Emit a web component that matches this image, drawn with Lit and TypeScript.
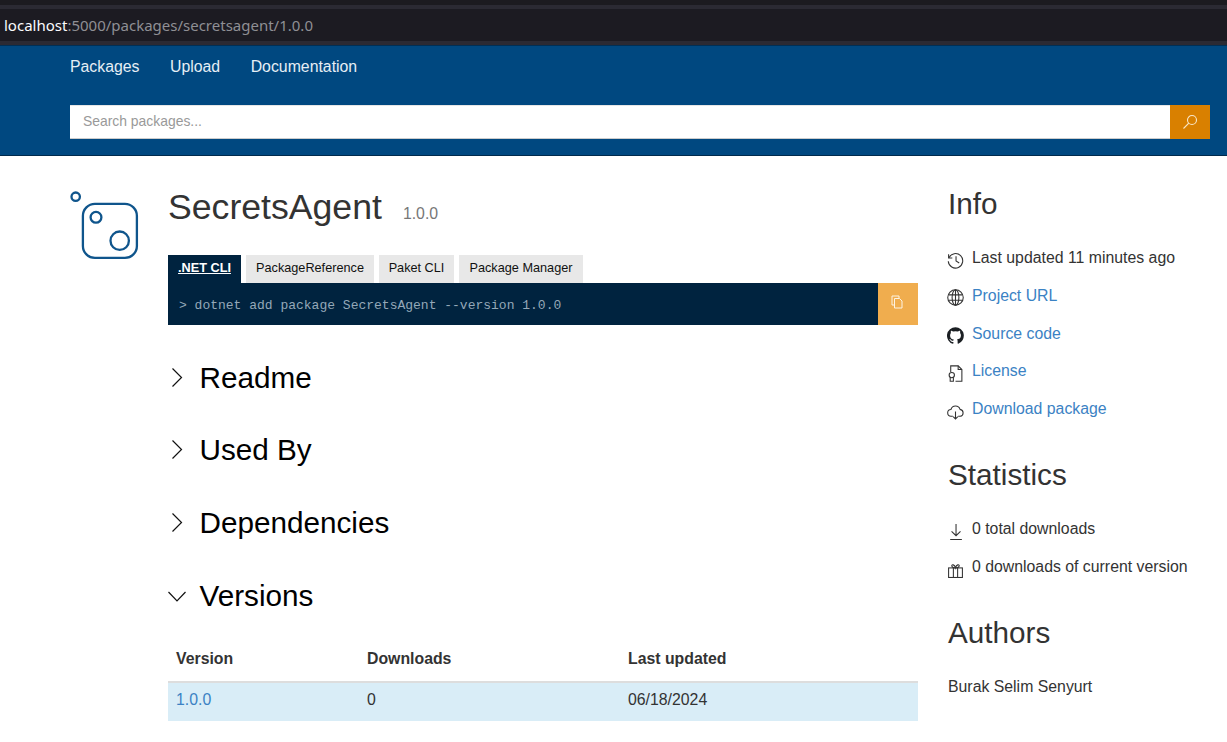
import { LitElement, css, html, svg } from 'lit';
import { customElement } from 'lit/decorators.js';

const icon = (content: unknown, cls = '') =>
  html`<svg class="icon ${cls}" viewBox="0 0 16 16" fill="none" stroke="#333" stroke-width="1">${content}</svg>`;

const icons = {
  history: svg`<path d="M1.500 2.200v3.500H5"/><path d="M1.800 5.500a6.800 6.800 0 1 1-.6 3.200"/><path d="M8.500 4v4.500l3 1.800"/>`,
  globe: svg`<circle cx="8" cy="8" r="7.300"/><ellipse cx="8" cy="8" rx="3.200" ry="7.300"/><path d="M8 .7v14.600M1.500 5.500h13M1.500 10.500h13"/>`,
  github: svg`<path fill="#1b1f23" stroke="none" d="M8 .2a8 8 0 0 0-2.500 15.600c.4.100.5-.2.5-.4v-1.400c-2.200.5-2.700-1-2.700-1-.4-.9-.9-1.200-.9-1.200-.7-.5.1-.5.1-.5.8.1 1.200.8 1.200.8.7 1.200 1.900.9 2.300.7.1-.5.300-.9.500-1.100-1.800-.2-3.600-.9-3.600-4 0-.9.300-1.600.8-2.100-.1-.2-.4-1 .1-2.100 0 0 .7-.2 2.200.8a7.600 7.600 0 0 1 4 0c1.500-1 2.200-.8 2.200-.8.4 1.100.2 1.900.1 2.100.5.600.8 1.300.8 2.100 0 3.100-1.900 3.700-3.700 3.900.3.300.6.800.6 1.500v2.200c0 .2.100.5.600.4A8 8 0 0 0 8 .2z"/>`,
  license: svg`<path d="M3.500 6.500V.8h7l3.500 3.500v11H8"/><path d="M10.500.8v3.500H14"/><circle cx="4.500" cy="9.500" r="2.500"/><path d="M3 11.500v3.800h3v-3.800"/>`,
  cloud: svg`<path d="M5.500 12.500H4a3.200 3.200 0 0 1-.3-6.400A4.500 4.500 0 0 1 12.300 6a3.300 3.300 0 0 1 .2 6.500h-2"/><path d="M8 8v7M5.800 12.800 8 15l2.200-2.200"/>`,
  down: svg`<path d="M8.500 1v11M4.300 7.800l4.200 4.200 4.200-4.200M3 15.500h11"/>`,
  gift: svg`<rect x="1.500" y="6.500" width="13" height="9"/><path d="M6 6.500v9M10 6.500v9"/><path d="M8 6.500C5.500 6.500 4.500 5.300 4.500 4.300S7 2.800 8 6.500c1-3.700 3.500-3.200 3.500-2.200S10.500 6.500 8 6.500z"/>`,
};

@customElement('app-root')
export class AppRoot extends LitElement {
  static styles = css`
    * {
      box-sizing: border-box;
    }

    :host {
      display: block;
      height: 742px;
      overflow: hidden;
      background: #fff;
      color: #333;
      font-family: 'Liberation Sans', Arial, sans-serif;
      font-size: 15.84px;
      line-height: 1.15;
    }

    a {
      color: #3b82c4;
      text-decoration: none;
    }

    .browser {
      height: 46px;
      background: #1c1b22;
      border-top: 5px solid #1c1b20;
      border-bottom: 1px solid #002f55;
      display: flex;
      flex-direction: column;
    }

    .browser .band {
      height: 4px;
      background: #2b2a33;
      flex: none;
    }

    .url {
      flex: 1;
      display: flex;
      align-items: center;
      padding: 2px 0 0 4px;
      font-family: 'Noto Sans', 'Open Sans', sans-serif;
      font-size: 15px;
      color: #8f8f94;
    }

    .url b {
      font-weight: 400;
      color: #fbfbfe;
    }

    header {
      height: 110px;
      background: #004880;
      border-bottom: 1px solid #002a4c;
      padding: 0 17px 0 70px;
    }

    nav {
      display: flex;
      gap: 30.5px;
      height: 59px;
      padding-top: 12px;
    }

    nav a {
      color: #e6eef5;
    }

    .search {
      display: flex;
      height: 34px;
    }

    .search .input {
      flex: 1;
      background: #fff;
      border-top: 1px solid #e6e6e6;
      border-bottom: 1px solid #ccc;
      padding: 7px 13px;
      font-size: 13.9px;
      color: #999;
    }

    .search .go {
      width: 40px;
      background: #d98000;
      display: flex;
      align-items: center;
      justify-content: center;
    }

    .search svg {
      width: 16px;
      height: 16px;
    }

    .page {
      display: flex;
      padding-left: 70px;
    }

    .logo {
      width: 98px;
      flex: none;
      padding-top: 34px;
    }

    .logo svg {
      display: block;
      width: 70px;
      height: 72px;
    }

    .content {
      width: 750px;
      flex: none;
    }

    .title {
      display: flex;
      align-items: baseline;
      gap: 21px;
      padding-top: 31px;
      height: 99px;
    }

    .title h1 {
      margin: 0;
      font-size: 35.64px;
      font-weight: 400;
    }

    .title span {
      color: #777;
    }

    .tabs {
      display: flex;
      gap: 5px;
      height: 28px;
    }

    .tab {
      background: #e8e8e8;
      color: #111;
      font-size: 12.7px;
      display: flex;
      align-items: center;
      justify-content: center;
      padding-bottom: 1px;
    }

    .tab.active {
      background: #00233f;
      color: #fff;
      font-weight: 700;
      text-decoration: underline;
    }

    .command {
      display: flex;
      height: 42px;
    }

    .command code {
      flex: 1;
      background: #00233f;
      color: #94a8b8;
      font-family: 'Liberation Mono', monospace;
      font-size: 13px;
      padding: 4px 0 0 11px;
      display: flex;
      align-items: center;
    }

    .command .copy {
      width: 40px;
      background: #f0ad4e;
      display: flex;
      align-items: center;
      justify-content: center;
      padding: 0 2px 4px 0;
    }

    .command svg {
      width: 14px;
      height: 14px;
    }

    .sections {
      padding-top: 16.3px;
    }

    .section {
      height: 72.8px;
      display: flex;
      align-items: center;
      gap: 13.5px;
      color: #000;
      font-size: 29.7px;
    }

    .section svg {
      width: 18px;
      height: 20px;
      flex: none;
    }

    table {
      width: 100%;
      border-collapse: collapse;
      margin-top: 9.5px;
    }

    th {
      text-align: left;
      font-weight: 700;
      padding: 8px 8px 13px;
      border-bottom: 2px solid #ddd;
    }

    td {
      padding: 8px;
      height: 39px;
      background: #d9edf7;
      vertical-align: top;
    }

    .c1 {
      width: 191px;
    }

    .c2 {
      width: 261px;
    }

    aside {
      padding: 31px 0 0 30px;
      flex: 1;
    }

    aside h2 {
      margin: 0 0 28.2px;
      font-size: 29.7px;
      font-weight: 400;
      line-height: 34px;
    }

    .rows {
      display: flex;
      flex-direction: column;
      gap: 19.75px;
      margin-bottom: 40px;
    }

    .rows.stats {
      margin-bottom: 39.85px;
    }

    .row {
      display: flex;
      align-items: center;
      gap: 7px;
      height: 18px;
      white-space: nowrap;
    }

    .icon {
      width: 17px;
      height: 17px;
      flex: none;
      position: relative;
      top: 2px;
      left: -1px;
    }

    .author {
      margin-top: 19px;
    }
  `;

  render() {
    const chevron = (open: boolean) =>
      open
        ? html`<svg viewBox="0 0 18 20" fill="none" stroke="#111" stroke-width="1.200"><path d="M.5 6l8.500 9 8.500-9"/></svg>`
        : html`<svg viewBox="0 0 18 20" fill="none" stroke="#111" stroke-width="1.200"><path d="M4.500 .5l9 9-9 9"/></svg>`;

    return html`
      <div class="browser">
        <div class="band"></div>
        <div class="url"><span><b>localhost</b>:5000/packages/secretsagent/1.0.0</span></div>
        <div class="band"></div>
      </div>
      <header>
        <nav>
          <a>Packages</a>
          <a>Upload</a>
          <a>Documentation</a>
        </nav>
        <div class="search">
          <div class="input">Search packages...</div>
          <div class="go">
            <svg viewBox="0 0 16 16" fill="none" stroke="#f8e6c8" stroke-width="1.100">
              <circle cx="10" cy="6" r="4.500" />
              <path d="M6.800 9.200 1.500 14.500" />
            </svg>
          </div>
        </div>
      </header>
      <div class="page">
        <div class="logo">
          <svg viewBox="0 0 70 72" fill="none" stroke="#0f558c" stroke-width="2.300">
            <circle cx="5.700" cy="6.700" r="4.200" />
            <rect x="12.900" y="13.900" width="54" height="54" rx="12" />
            <circle cx="26" cy="27.300" r="5.400" />
            <circle cx="49.700" cy="50.700" r="9.200" />
          </svg>
        </div>
        <div class="content">
          <div class="title">
            <h1>SecretsAgent</h1>
            <span>1.0.0</span>
          </div>
          <div class="tabs">
            <div class="tab active" style="width:73px">.NET CLI</div>
            <div class="tab" style="width:128px">PackageReference</div>
            <div class="tab" style="width:75px">Paket CLI</div>
            <div class="tab" style="width:124px">Package Manager</div>
          </div>
          <div class="command">
            <code>&gt; dotnet add package SecretsAgent --version 1.0.0</code>
            <div class="copy">
              <svg viewBox="0 0 14 14" fill="none" stroke="#fdf3e3" stroke-width="1">
                <path d="M9 3V1H2v9h2" />
                <path d="M4.500 3.500h5l2.500 2.500v7H4.500z" />
              </svg>
            </div>
          </div>
          <div class="sections">
            <div class="section">${chevron(false)}<span>Readme</span></div>
            <div class="section">${chevron(false)}<span>Used By</span></div>
            <div class="section">${chevron(false)}<span>Dependencies</span></div>
            <div class="section">${chevron(true)}<span>Versions</span></div>
          </div>
          <table>
            <tr>
              <th class="c1">Version</th>
              <th class="c2">Downloads</th>
              <th>Last updated</th>
            </tr>
            <tr>
              <td><a>1.0.0</a></td>
              <td>0</td>
              <td>06/18/2024</td>
            </tr>
          </table>
        </div>
        <aside>
          <h2>Info</h2>
          <div class="rows">
            <div class="row">${icon(icons.history)}<span>Last updated 11 minutes ago</span></div>
            <div class="row">${icon(icons.globe)}<a>Project URL</a></div>
            <div class="row">${icon(icons.github)}<a>Source code</a></div>
            <div class="row">${icon(icons.license)}<a>License</a></div>
            <div class="row">${icon(icons.cloud)}<a>Download package</a></div>
          </div>
          <h2>Statistics</h2>
          <div class="rows stats">
            <div class="row">${icon(icons.down)}<span>0 total downloads</span></div>
            <div class="row">${icon(icons.gift)}<span>0 downloads of current version</span></div>
          </div>
          <h2>Authors</h2>
          <div class="author">Burak Selim Senyurt</div>
        </aside>
      </div>
    `;
  }
}
